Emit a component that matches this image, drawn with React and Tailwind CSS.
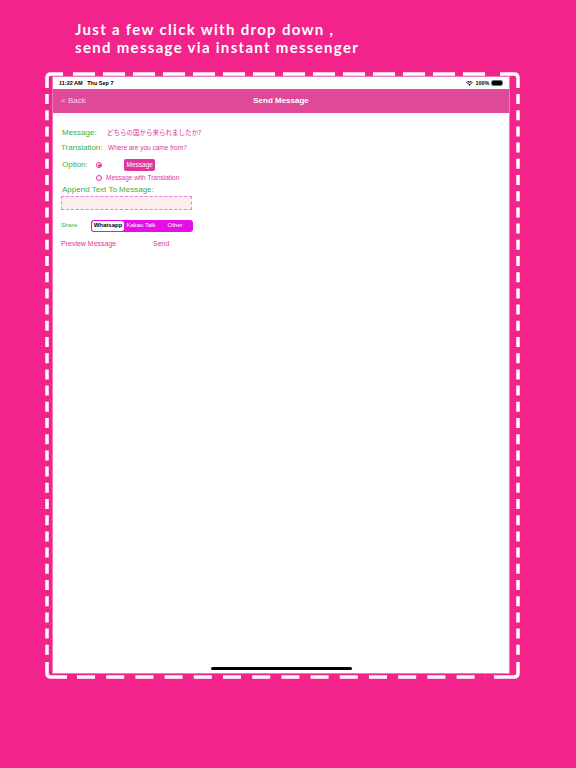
import React from 'react';

const pink = '#f2238a';

function DashedFrame() {
  return (
    <svg className="pointer-events-none absolute inset-0" width="475" height="607" viewBox="0 0 475 607">
      <g fill="none" stroke="#ffffff" strokeWidth="3.5" strokeLinecap="butt">
        <path d="M2 16 V6 Q2 2 6 2 H18" />
        <path d="M455 2 H469 Q473 2 473 6 V16" />
        <path d="M2 590 V601 Q2 605 6 605 H22" />
        <path d="M449 605 H469 Q473 605 473 601 V590" />
        <line x1="28" y1="2" x2="448" y2="2" strokeDasharray="22 8" />
        <line x1="32" y1="605" x2="441" y2="605" strokeDasharray="18 11.2" />
        <line x1="2" y1="22" x2="2" y2="586" strokeDasharray="10 6.2" />
        <line x1="473" y1="22" x2="473" y2="586" strokeDasharray="10 6.2" />
      </g>
    </svg>
  );
}

function StatusBar() {
  return (
    <div className="flex h-[12px] items-center justify-between bg-white pl-[6px] pr-[6px] text-[5.5px] font-semibold text-black">
      <span>11:22 AM&nbsp;&nbsp;&nbsp;Thu Sep 7</span>
      <span className="flex items-center gap-[2px]">
        <svg width="7" height="5" viewBox="0 0 14 10">
          <path d="M7 10 L4.5 7.2 A3.5 3.5 0 0 1 9.5 7.2 Z" fill="#000" />
          <path d="M2.6 5.2 A6.5 6.5 0 0 1 11.4 5.2" stroke="#000" strokeWidth="1.6" fill="none" />
          <path d="M0.6 3 A9.5 9.5 0 0 1 13.4 3" stroke="#000" strokeWidth="1.6" fill="none" />
        </svg>
        <span>100%</span>
        <span className="flex items-center">
          <span className="block h-[4px] w-[10px] rounded-[1px] bg-black outline outline-[0.5px] outline-gray-500" />
          <span className="ml-[0.5px] block h-[2px] w-[1px] bg-gray-500" />
        </span>
      </span>
    </div>
  );
}

function Radio({ on }) {
  return (
    <span className="flex h-[6px] w-[6px] items-center justify-center rounded-full border border-[#e0359a]">
      {on && <span className="h-[3px] w-[3px] rounded-full bg-[#e0359a]" />}
    </span>
  );
}

export default function App() {
  const green = 'text-[#3fae3f]';
  return (
    <div
      className="flex h-[768px] w-[576px] flex-col overflow-hidden"
      style={{ backgroundColor: pink, fontFamily: '"Liberation Sans", Arial, sans-serif' }}
    >
      <div
        className="pl-[75px] pt-[20px] text-[15px] font-bold leading-[18px] tracking-[1.3px] text-white"
        style={{ fontFamily: 'Lato, "Open Sans", sans-serif' }}
      >
        <div>Just a few click with drop down ,</div>
        <div>send message via instant messenger</div>
      </div>

      <div className="relative ml-[45px] mt-[16px] h-[607px] w-[475px] pb-[5px] pl-[7px] pr-[10px] pt-[4px]">
        <div className="flex h-full flex-col border border-[#f07ab8] bg-white">
          <StatusBar />
          <div className="relative flex h-[24px] items-center justify-center bg-[#e0489a]">
            <span className="absolute left-[8px] text-[8px] text-[#fad2e8]">&lt; Back</span>
            <span className="text-[8px] font-semibold text-white">Send Message</span>
          </div>

          <div className="flex flex-1 flex-col pl-[8px] pt-[13px]">
            <div className="flex h-[14px] items-center">
              <span className={`w-[46px] pl-[1px] text-[8px] ${green}`}>Message:</span>
              <span
                className="text-[6.5px] text-[#e0359a]"
                style={{ fontFamily: '"Noto Sans CJK JP", "Liberation Sans", sans-serif' }}
              >
                どちらの国から来られましたか?
              </span>
            </div>
            <div className="flex h-[15px] items-center">
              <span className={`w-[47px] text-[8px] ${green}`}>Translation:</span>
              <span className="text-[6.5px] text-[#e0359a]">Where are you came from?</span>
            </div>

            <div className="mt-[3px] flex h-[14px] items-center">
              <span className={`w-[35px] pl-[1px] text-[8px] ${green}`}>Option:</span>
              <Radio on />
              <span className="ml-[22px] rounded-[2px] bg-[#e0359a] px-[2.5px] py-[1px] text-[6.5px] text-white">Message</span>
            </div>
            <div className="flex h-[11px] items-center pl-[35px]">
              <Radio />
              <span className="ml-[4px] text-[6.5px] text-[#e0359a]">Message with Translation</span>
            </div>
            <div className={`mt-[1px] h-[12px] pl-[1px] text-[8px] leading-[12px] ${green}`}>Append Text To Message:</div>
            <div className="h-[14px] w-[131px] border border-dashed border-[#f078e8] bg-[#fdeeee]" />

            <div className="mt-[9px] flex h-[13px] items-center">
              <span className={`w-[30px] text-[6px] ${green}`}>Share:</span>
              <div className="flex h-[12px] w-[102px] items-center rounded-[3px] bg-[#e60ee6] p-[1px] text-[6px] text-white">
                <span className="flex h-full w-[32px] items-center justify-center rounded-[2.5px] bg-white font-semibold text-black">
                  Whatsapp
                </span>
                <span className="flex w-[34px] justify-center">Kakao Talk</span>
                <span className="flex flex-1 justify-center">Other</span>
              </div>
            </div>

            <div className="mt-[6px] flex h-[12px] items-center text-[7px] text-[#e0359a]">
              <span className="w-[92px]">Preview Message</span>
              <span>Send</span>
            </div>

            <div className="flex-1" />
            <div className="mb-[3px] ml-[150px] h-[3px] w-[141px] rounded-full bg-black" />
          </div>
        </div>
        <DashedFrame />
      </div>
    </div>
  );
}
